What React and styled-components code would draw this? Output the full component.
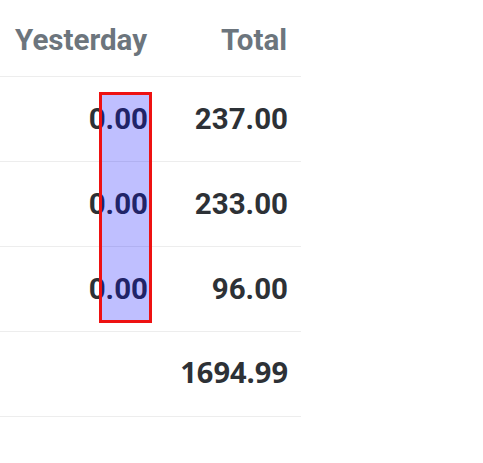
import React from 'react';
import styled, { createGlobalStyle } from 'styled-components';

const GlobalStyle = createGlobalStyle`
  html, body { margin: 0; padding: 0; background: #ffffff; }
  body { font-family: Roboto, "Liberation Sans", sans-serif; }
`;

const TableWrap = styled.div`
  position: relative;
  width: 301px;
`;

const Row = styled.div`
  display: grid;
  grid-template-columns: 161px 140px;
  height: ${props => props.$head ? '76px' : '84px'};
  border-bottom: 1px solid #ededed;
  box-sizing: content-box;
`;

const Cell = styled.div`
  display: flex;
  justify-content: flex-end;
  align-items: ${props => props.$head ? 'flex-start' : 'center'};
  padding: ${props => props.$head ? '24px 14px 0 0' : props.$alt ? '0 13px 5px 0' : '0 13px 0 0'};
  font-family: ${props => props.$alt ? '"Open Sans", "Noto Sans", sans-serif' : 'Roboto, "Liberation Sans", sans-serif'};
  font-size: ${props => props.$alt ? '29px' : '29.5px'};
  line-height: 33px;
  font-weight: 700;
  color: ${props => props.$head ? '#6c757d' : '#2d3136'};
  white-space: nowrap;
`;

const Highlight = styled.div`
  position: absolute;
  left: 99px;
  top: 92px;
  width: 47px;
  height: 225px;
  border: 3px solid #ee1111;
  background: rgba(0, 0, 255, 0.25);
  pointer-events: none;
`;

const rows = [
  { yesterday: '0.00', total: '237.00' },
  { yesterday: '0.00', total: '233.00' },
  { yesterday: '0.00', total: '96.00' },
  { yesterday: '', total: '1694.99', alt: true },
];

export default function App() {
  return (
    <>
      <GlobalStyle />
      <TableWrap>
        <Row $head>
          <Cell $head>Yesterday</Cell>
          <Cell $head>Total</Cell>
        </Row>
        {rows.map((r, i) => (
          <Row key={i}>
            <Cell $alt={r.alt}>{r.yesterday}</Cell>
            <Cell $alt={r.alt}>{r.total}</Cell>
          </Row>
        ))}
        <Highlight />
      </TableWrap>
    </>
  );
}
